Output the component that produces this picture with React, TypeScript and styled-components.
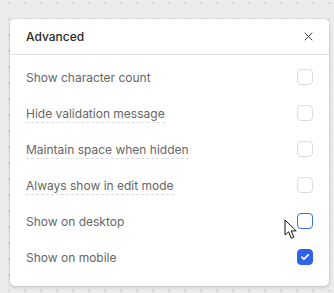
import styled, { createGlobalStyle } from 'styled-components';

const options = [
  { label: 'Show character count', hint: false, state: 'off' },
  { label: 'Hide validation message', hint: true, state: 'off' },
  { label: 'Maintain space when hidden', hint: true, state: 'off' },
  { label: 'Always show in edit mode', hint: true, state: 'off' },
  { label: 'Show on desktop', hint: false, state: 'hover' },
  { label: 'Show on mobile', hint: false, state: 'on' },
] as const;

function App() {
  return (
    <>
      <GlobalStyle />
      <Canvas>
        <Panel>
          <Header>
            <Title>Advanced</Title>
            <Close aria-label='Close'>
              <svg width='9' height='9' viewBox='0 0 9 9'>
                <path d='M1 1L8 8M8 1L1 8' stroke='#444' strokeWidth='1' strokeLinecap='round' />
              </svg>
            </Close>
          </Header>
          <List>
            {options.map((o) => (
              <Row key={o.label}>
                <Label $hint={o.hint}>{o.label}</Label>
                <Check $state={o.state}>
                  {o.state === 'on' && (
                    <svg width='10' height='8' viewBox='0 0 10 8'>
                      <path
                        d='M1.8 4.2L3.9 6.2L8.3 1.8'
                        fill='none'
                        stroke='#fff'
                        strokeWidth='1.7'
                        strokeLinecap='round'
                        strokeLinejoin='round'
                      />
                    </svg>
                  )}
                  {o.state === 'hover' && (
                    <Cursor width='14' height='21' viewBox='0 0 14 21'>
                      <path
                        d='M1 1L1 16L4.6 12.8L7.2 19.2L9.8 18.1L7.2 11.9L12.2 11.9Z'
                        fill='#fff'
                        stroke='#111'
                        strokeWidth='1'
                        strokeLinejoin='round'
                      />
                    </Cursor>
                  )}
                </Check>
              </Row>
            ))}
          </List>
        </Panel>
      </Canvas>
    </>
  );
}

const GlobalStyle = createGlobalStyle`
  html, body {
    margin: 0;
    padding: 0;
  }
  body {
    background-color: #ececec;
    background-image: radial-gradient(circle, #d6d6d6 1px, transparent 1.3px);
    background-size: 16px 16px;
    background-position: 1px -5px;
    font-family: Inter, 'Noto Sans', sans-serif;
  }
`;

const Canvas = styled.div`
  padding: 19px 5px 7px 10px;
  height: 293px;
  box-sizing: border-box;
`;

const Panel = styled.div`
  width: 319px;
  background: #fff;
  border-radius: 5px;
  box-shadow: 0 0 0 1px rgba(0, 0, 0, 0.05), 0 2px 4px rgba(0, 0, 0, 0.12);
`;

const Header = styled.div`
  display: flex;
  align-items: center;
  justify-content: space-between;
  height: 35px;
  padding: 0 15px 0 16px;
  border-bottom: 1px solid #e3e3e3;
`;

const Title = styled.span`
  font-size: 12px;
  font-weight: 500;
  color: #2a2a2a;
`;

const Close = styled.button`
  display: flex;
  align-items: center;
  justify-content: center;
  width: 12px;
  height: 12px;
  padding: 0;
  border: none;
  background: none;
`;

const List = styled.div`
  display: flex;
  flex-direction: column;
  padding: 4px 0 11px;
`;

const Row = styled.div`
  display: flex;
  align-items: center;
  justify-content: space-between;
  height: 36px;
  padding: 0 16px;
`;

const Label = styled.span<{ $hint: boolean }>`
  font-size: 12px;
  color: #666;
  padding-bottom: 1px;
  border-bottom: 1px dashed ${(p) => (p.$hint ? '#dedede' : 'transparent')};
  margin-bottom: -2px;
`;

const Check = styled.span<{ $state: 'off' | 'hover' | 'on' }>`
  position: relative;
  display: flex;
  align-items: center;
  justify-content: center;
  width: 16px;
  height: 16px;
  box-sizing: border-box;
  border-radius: 4px;
  border: 1px solid
    ${(p) => (p.$state === 'off' ? '#dcdcdc' : p.$state === 'hover' ? '#3a6cf0' : '#2f63ea')};
  background: ${(p) => (p.$state === 'on' ? '#2f63ea' : '#fff')};
`;

const Cursor = styled.svg`
  position: absolute;
  left: -14px;
  top: 5px;
`;

export default App;
